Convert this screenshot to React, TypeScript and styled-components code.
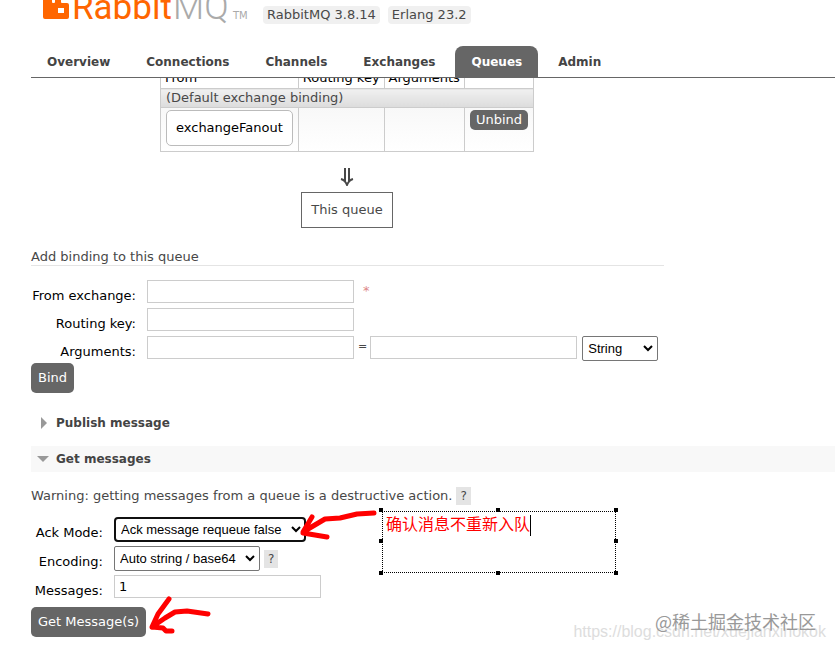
import React from "react";
import styled, { createGlobalStyle } from "styled-components";

const GlobalStyle = createGlobalStyle`
  * { box-sizing: border-box; }
  html, body, #root { height: 100%; }
  body {
    margin: 0;
    overflow: hidden;
    background: #fff;
    color: #484848;
    font: 13px/18px Verdana, "DejaVu Sans", sans-serif;
  }
`;

const Page = styled.div`
  position: relative;
  display: flex;
  flex-direction: column;
  height: 100%;
  overflow: hidden;
`;

const Header = styled.header`
  flex: none;
  margin-left: 31px;
  border-bottom: 1px solid #666;
`;

const Brand = styled.div`
  display: flex;
  align-items: flex-start;
  height: 46px;
  padding-left: 12px;
`;

const Logo = styled.svg`
  display: block;
  width: 206px;
  height: 24px;
  margin-right: 14px;
`;

const Version = styled.span`
  margin: 6px 8px 0 0;
  padding: 0 4px;
  border-radius: 4px;
  background: #f0f0f0;
`;

const Tabs = styled.nav`
  display: flex;
`;

const Tab = styled.a<{ $active?: boolean }>`
  height: 31px;
  padding: 0 16px;
  margin-right: 4px;
  border-radius: 8px 8px 0 0;
  background: ${(p) => (p.$active ? "#666" : "transparent")};
  color: ${(p) => (p.$active ? "#fff" : "#444")};
  font-size: 12px;
  font-weight: bold;
  line-height: 33px;
  text-decoration: none;
`;

const Viewport = styled.main`
  flex: 1;
  min-height: 0;
  overflow: hidden;
  padding-left: 31px;
`;

const Diagram = styled.section`
  display: flex;
  flex-direction: column;
  align-items: center;
  width: 632px;
`;

const Bindings = styled.table`
  margin-top: -12px;
  border-collapse: collapse;

  th, td {
    padding: 2px 5px;
    border: 1px solid #ccc;
    text-align: left;
    vertical-align: top;
  }
  th { height: 22px; padding: 2px 4px 0; color: #000; font-weight: normal; }
`;

const DefaultCell = styled.td`
  height: 19px;
  && { padding: 0 5px; }
  background: linear-gradient(#f0f0f0, #dcdcdc);
`;

const BindingRow = styled.tr`
  height: 44px;
  background: linear-gradient(#f8f8f8, #fff);
`;

const ExchangeLink = styled.a`
  display: block;
  padding: 8px 9px;
  border: 1px solid #bbb;
  border-radius: 5px;
  background: #fff;
  color: #000;
  text-decoration: none;
`;

const Button = styled.button<{ $small?: boolean }>`
  display: block;
  padding: ${(p) => (p.$small ? "0 6px" : "6px 7px")};
  border: 0;
  border-radius: 5px;
  background: #666;
  color: #fff;
  font: inherit;
  line-height: ${(p) => (p.$small ? "20px" : "18px")};
`;

const Arrow = styled.svg`
  width: 14px;
  height: 18px;
  margin: 16px 0 6px;
`;

const QueueBox = styled.div`
  padding: 8px 9px;
  border: 1px solid #666;
`;

const SectionTitle = styled.h3`
  width: 633px;
  margin: 20px 0 14px;
  border-bottom: 1px solid #e4e4e4;
  font-size: 13px;
  font-weight: normal;
  line-height: 17px;
`;

const Form = styled.form`
  display: flex;
  flex-direction: column;
  align-items: flex-start;
`;

const Field = styled.div<{ $gap: number }>`
  display: flex;
  align-items: flex-start;
  margin-bottom: ${(p) => p.$gap}px;
`;

const Label = styled.label<{ $width: number }>`
  width: ${(p) => p.$width}px;
  margin-right: 11px;
  padding-top: 7px;
  color: #000;
  text-align: right;
`;

const Input = styled.input`
  width: 207px;
  height: 23px;
  padding: 3px 4px;
  border: 1px solid #ccc;
  background: #fff;
  color: #000;
  font: inherit;
  line-height: 15px;
`;

const Mark = styled.span<{ $required?: boolean }>`
  margin-left: ${(p) => (p.$required ? "9px" : "4px")};
  margin-right: 3px;
  color: ${(p) => (p.$required ? "#d88" : "#484848")};
  font-size: ${(p) => (p.$required ? "13px" : "11px")};
  line-height: 22px;
`;

const SelectWrap = styled.span<{ $width: number }>`
  display: grid;
  align-items: center;
  width: ${(p) => p.$width}px;
  > * { grid-area: 1 / 1; }
  ${Input} + & { margin-left: 5px; }
`;

const Select = styled.select<{ $focused?: boolean }>`
  appearance: none;
  width: 100%;
  height: 25px;
  padding: 0 5px;
  border: ${(p) => (p.$focused ? "2px solid #101010" : "1px solid #767676")};
  border-radius: ${(p) => (p.$focused ? "4px" : "2px")};
  background: #fff;
  color: #000;
  font: 13px/20px "Liberation Sans", Arial, sans-serif;
  outline: none;
`;

const Chevron = styled.svg`
  justify-self: end;
  width: 10px;
  height: 7px;
  margin-right: 5px;
  pointer-events: none;
`;

const Disclosures = styled.div`
  display: flex;
  flex-direction: column;
  gap: 10px;
  margin: 17px 0 15px;
`;

const Disclosure = styled.button<{ $open?: boolean }>`
  display: flex;
  align-items: center;
  gap: 7px;
  width: 100%;
  height: 26px;
  padding: 0 6px;
  border: 0;
  background: ${(p) => (p.$open ? "#f8f8f8" : "#fff")};
  color: #444;
  font: bold 12px/18px Verdana, "DejaVu Sans", sans-serif;
`;

const Triangle = styled.svg`
  width: 12px;
  height: 12px;
`;

const Warning = styled.p`
  margin: 0 0 12px;
`;

const Help = styled.button`
  align-self: center;
  margin-left: 4px;
  padding: 0 4px;
  border: 0;
  background: #e4e4e4;
  color: #484848;
  font: 12px/18px Verdana, "DejaVu Sans", sans-serif;
`;

const Annotations = styled.svg`
  position: absolute;
  left: 0;
  top: 0;
  width: 835px;
  height: 650px;
  pointer-events: none;
`;

const Note = styled.div`
  position: absolute;
  left: 382px;
  top: 511px;
  width: 235px;
  height: 62px;
  padding-left: 4px;
  color: #f00;
  font: 16px/25px "Noto Sans CJK SC", sans-serif;
`;

const Caret = styled.span`
  display: inline-block;
  width: 1px;
  height: 21px;
  background: #000;
  vertical-align: middle;
`;

const Watermark = styled.div`
  position: absolute;
  right: 19px;
  bottom: 17px;
  color: #999;
  font: 18px/24px "Noto Sans CJK SC", sans-serif;
  white-space: nowrap;
`;

const SourceUrl = styled(Watermark)`
  right: 9px;
  bottom: 8px;
  color: #ddd;
  font: 16px/20px "Liberation Sans", Arial, sans-serif;
`;

const tabs = ["Overview", "Connections", "Channels", "Exchanges", "Queues", "Admin"];

const handles = [
  [381, 510], [498, 510], [616, 510], [381, 541], [616, 541], [381, 573], [498, 573], [616, 573],
];

function SelectBox({ id, width, value, focused, label }: {
  id: string; width: number; value: string; focused?: boolean; label?: string;
}) {
  return (
    <SelectWrap $width={width}>
      <Select id={id} $focused={focused} aria-label={label}><option>{value}</option></Select>
      <Chevron viewBox="0 0 10 7"><path d="M1 1l4 4 4-4" fill="none" stroke="#000" strokeWidth="2" /></Chevron>
    </SelectWrap>
  );
}

export default function App() {
  return (
    <Page>
      <GlobalStyle />
      <Header>
        <Brand>
          <Logo viewBox="0 0 206 24" aria-label="RabbitMQ">
            <path d="M0 0h9v2q0 1 1 1h1q1 0 1-1V0h6v2q0 1 1 1h5q2 0 2 2v12q0 2-2 2H2q-2 0-2-2zM15 8v5h6V8z" fillRule="evenodd" fill="#f60" />
            <text x="29" y="19" fill="#f60" fontFamily="Roboto" fontSize="35">Rabbit</text>
            <text x="130" y="19" fill="#aaa" fontFamily="Roboto" fontWeight="300" fontSize="36">MQ</text>
            <text x="190" y="19" fill="#aaa" fontFamily="DejaVu Sans" fontSize="10">TM</text>
          </Logo>
          <Version>RabbitMQ 3.8.14</Version>
          <Version>Erlang 23.2</Version>
        </Brand>
        <Tabs>
          {tabs.map((t) => <Tab key={t} href="#" $active={t === "Queues"}>{t}</Tab>)}
        </Tabs>
      </Header>

      <Viewport>
        <Diagram>
          <Bindings>
            <thead>
              <tr><th>From</th><th>Routing key</th><th>Arguments</th><th /></tr>
            </thead>
            <tbody>
              <tr><DefaultCell colSpan={4}>(Default exchange binding)</DefaultCell></tr>
              <BindingRow>
                <td><ExchangeLink href="#">exchangeFanout</ExchangeLink></td>
                <td /><td />
                <td><Button $small>Unbind</Button></td>
              </BindingRow>
            </tbody>
          </Bindings>
          <Arrow viewBox="0 0 14 18">
            <path d="M5 0v14M9 0v14M1 11q4 1 6 6q2-5 6-6" fill="none" stroke="#484848" strokeWidth="2" />
          </Arrow>
          <QueueBox>This queue</QueueBox>
        </Diagram>

        <SectionTitle>Add binding to this queue</SectionTitle>
        <Form>
          <Field $gap={3}>
            <Label htmlFor="from" $width={105}>From exchange:</Label>
            <Input id="from" />
            <Mark $required>*</Mark>
          </Field>
          <Field $gap={3}>
            <Label htmlFor="routing" $width={105}>Routing key:</Label>
            <Input id="routing" />
          </Field>
          <Field $gap={2}>
            <Label htmlFor="argument" $width={105}>Arguments:</Label>
            <Input id="argument" />
            <Mark>=</Mark>
            <Input aria-label="Argument value" />
            <SelectBox id="type" width={76} value="String" label="Argument type" />
          </Field>
          <Button type="button">Bind</Button>
        </Form>

        <Disclosures>
          <Disclosure aria-expanded={false}>
            <Triangle viewBox="0 0 12 12"><path d="M4 0l6 6-6 6z" fill="#999" /></Triangle>
            Publish message
          </Disclosure>
          <Disclosure $open aria-expanded>
            <Triangle viewBox="0 0 12 12"><path d="M0 3h12L6 9z" fill="#999" /></Triangle>
            Get messages
          </Disclosure>
        </Disclosures>

        <Warning>
          Warning: getting messages from a queue is a destructive action.
          <Help>?</Help>
        </Warning>
        <Form>
          <Field $gap={4}>
            <Label htmlFor="ack" $width={72}>Ack Mode:</Label>
            <SelectBox id="ack" width={192} value="Ack message requeue false" focused />
          </Field>
          <Field $gap={4}>
            <Label htmlFor="encoding" $width={72}>Encoding:</Label>
            <SelectBox id="encoding" width={146} value="Auto string / base64" />
            <Help type="button">?</Help>
          </Field>
          <Field $gap={7}>
            <Label htmlFor="count" $width={72}>Messages:</Label>
            <Input id="count" defaultValue="1" />
          </Field>
          <Button type="button">Get Message(s)</Button>
        </Form>
      </Viewport>

      <Note>确认消息不重新入队<Caret /></Note>
      <Annotations viewBox="0 0 835 650">
        <rect x="382" y="511" width="233" height="61" fill="none" stroke="#000" strokeDasharray="1 1" shapeRendering="crispEdges" />
        {handles.map(([x, y]) => <rect key={`${x}-${y}`} x={x - 2} y={y - 2} width="4" height="4" fill="#000" />)}
        <g fill="none" stroke="#f00" strokeWidth="5" strokeLinecap="round" strokeLinejoin="round">
          <path d="M374 513L357 514L340 518L325 519L303 532L312 517M303 533L315 535L327 537" />
          <path d="M208 614L187 611L175 612L165 618L152 627L158 614L169 599M152 627L163 628L166 631L172 631" />
        </g>
      </Annotations>
      <SourceUrl>https://blog.csdn.net/xuejianxinokok</SourceUrl>
      <Watermark>@稀土掘金技术社区</Watermark>
    </Page>
  );
}
